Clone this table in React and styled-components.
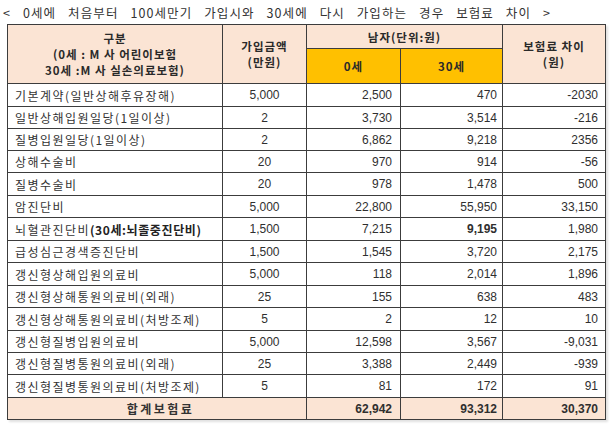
import React from "react";
import styled, { createGlobalStyle } from "styled-components";

const Global = createGlobalStyle`
  html, body { margin: 0; padding: 0; background: #fff; }
  body { font-family: "Noto Sans CJK KR", "Liberation Sans", sans-serif; color: #2b2b2b; }
`;

const Page = styled.div`
  width: 615px;
  height: 432px;
  padding: 0 0 0 7px;
  box-sizing: border-box;
`;

const Title = styled.div`
  height: 24px;
  line-height: 26px;
  margin-left: -4px;
  font-size: 12.5px;
  letter-spacing: 1.1px;
  word-spacing: 8px;
  color: #333;
  white-space: nowrap;
`;

const Table = styled.table`
  border-collapse: collapse;
  table-layout: fixed;
  width: 598px;
  box-shadow: 2px 2px 2px rgba(0, 0, 0, 0.12);
`;

const HeadCell = styled.th`
  background: ${(p) => (p.$accent ? "#ffc000" : "#fbe4d4")};
  border: 1px solid #3c3c3c;
  font-size: 11.5px;
  font-weight: 700;
  line-height: 16px;
  text-align: center;
  color: #2a2a2a;
  padding: 0;
  letter-spacing: 1px;
`;

const Row = styled.tr`
  height: ${(p) => p.$h}px;
  background: ${(p) => (p.$total ? "#fbe4d4" : "#fff")};
`;

const Label = styled.td`
  border: 1px solid #3c3c3c;
  padding: 0 0 0 7px;
  font-size: 12px;
  letter-spacing: ${(p) => (p.$bold ? 2.5 : 1.45)}px;
  white-space: nowrap;
  color: #333;
  text-align: ${(p) => (p.$center ? "center" : "left")};
  font-weight: ${(p) => (p.$bold ? 700 : 400)};
`;

const Strong = styled.b`
  font-weight: 700;
  letter-spacing: 0.6px;
  color: #222;
`;

const Num = styled.td`
  border: 1px solid #3c3c3c;
  padding: 0 ${(p) => p.$pr ?? 7}px 0 0;
  font-family: "Liberation Sans", Arial, sans-serif;
  font-size: 12px;
  color: #2f2f2f;
  text-align: ${(p) => (p.$center ? "center" : "right")};
  font-weight: ${(p) => (p.$bold ? 700 : 400)};
  white-space: nowrap;
`;

const rows = [
  ["기본계약(일반상해후유장해)", "5,000", "2,500", "470", "-2030"],
  ["일반상해입원일당(1일이상)", "2", "3,730", "3,514", "-216"],
  ["질병입원일당(1일이상)", "2", "6,862", "9,218", "2356"],
  ["상해수술비", "20", "970", "914", "-56"],
  ["질병수술비", "20", "978", "1,478", "500"],
  ["암진단비", "5,000", "22,800", "55,950", "33,150"],
  ["뇌혈관진단비", "1,500", "7,215", "9,195", "1,980", "(30세:뇌졸중진단비)"],
  ["급성심근경색증진단비", "1,500", "1,545", "3,720", "2,175"],
  ["갱신형상해입원의료비", "5,000", "118", "2,014", "1,896"],
  ["갱신형상해통원의료비(외래)", "25", "155", "638", "483"],
  ["갱신형상해통원의료비(처방조제)", "5", "2", "12", "10"],
  ["갱신형질병입원의료비", "5,000", "12,598", "3,567", "-9,031"],
  ["갱신형질병통원의료비(외래)", "25", "3,388", "2,449", "-939"],
  ["갱신형질병통원의료비(처방조제)", "5", "81", "172", "91"],
];

const heights = [23, 22, 22, 22, 23, 22, 23, 22, 23, 22, 23, 22, 22, 23, 22];

export default function App() {
  return (
    <Page>
      <Global />
      <Title>&lt; 0세에 처음부터 100세만기 가입시와 30세에 다시 가입하는 경우 보험료 차이 &gt;</Title>
      <Table>
        <colgroup>
          <col style={{ width: 215 }} />
          <col style={{ width: 84 }} />
          <col style={{ width: 94 }} />
          <col style={{ width: 102 }} />
          <col style={{ width: 103 }} />
        </colgroup>
        <thead>
          <tr style={{ height: 24 }}>
            <HeadCell rowSpan={2}>
              구분
              <br />
              (0세 : M 사 어린이보험
              <br />
              30세 :M 사 실손의료보험)
            </HeadCell>
            <HeadCell rowSpan={2}>
              가입금액
              <br />
              (만원)
            </HeadCell>
            <HeadCell colSpan={2}>남자(단위:원)</HeadCell>
            <HeadCell rowSpan={2}>
              보험료 차이
              <br />
              (원)
            </HeadCell>
          </tr>
          <tr style={{ height: 35 }}>
            <HeadCell $accent>0세</HeadCell>
            <HeadCell $accent>30세</HeadCell>
          </tr>
        </thead>
        <tbody>
          {rows.map((r, i) => (
            <Row key={i} $h={heights[i]}>
              <Label>
                {r[0]}
                {r[5] && <Strong>{r[5]}</Strong>}
              </Label>
              <Num $center $pr={0}>{r[1]}</Num>
              <Num $pr={8}>{r[2]}</Num>
              <Num $pr={5} $bold={i === 6}>{r[3]}</Num>
              <Num $pr={7}>{r[4]}</Num>
            </Row>
          ))}
          <Row $total $h={heights[14]}>
            <Label colSpan={2} $center $bold>
              합계보험료
            </Label>
            <Num $bold $pr={8}>62,942</Num>
            <Num $bold $pr={5}>93,312</Num>
            <Num $bold $pr={7}>30,370</Num>
          </Row>
        </tbody>
      </Table>
    </Page>
  );
}
